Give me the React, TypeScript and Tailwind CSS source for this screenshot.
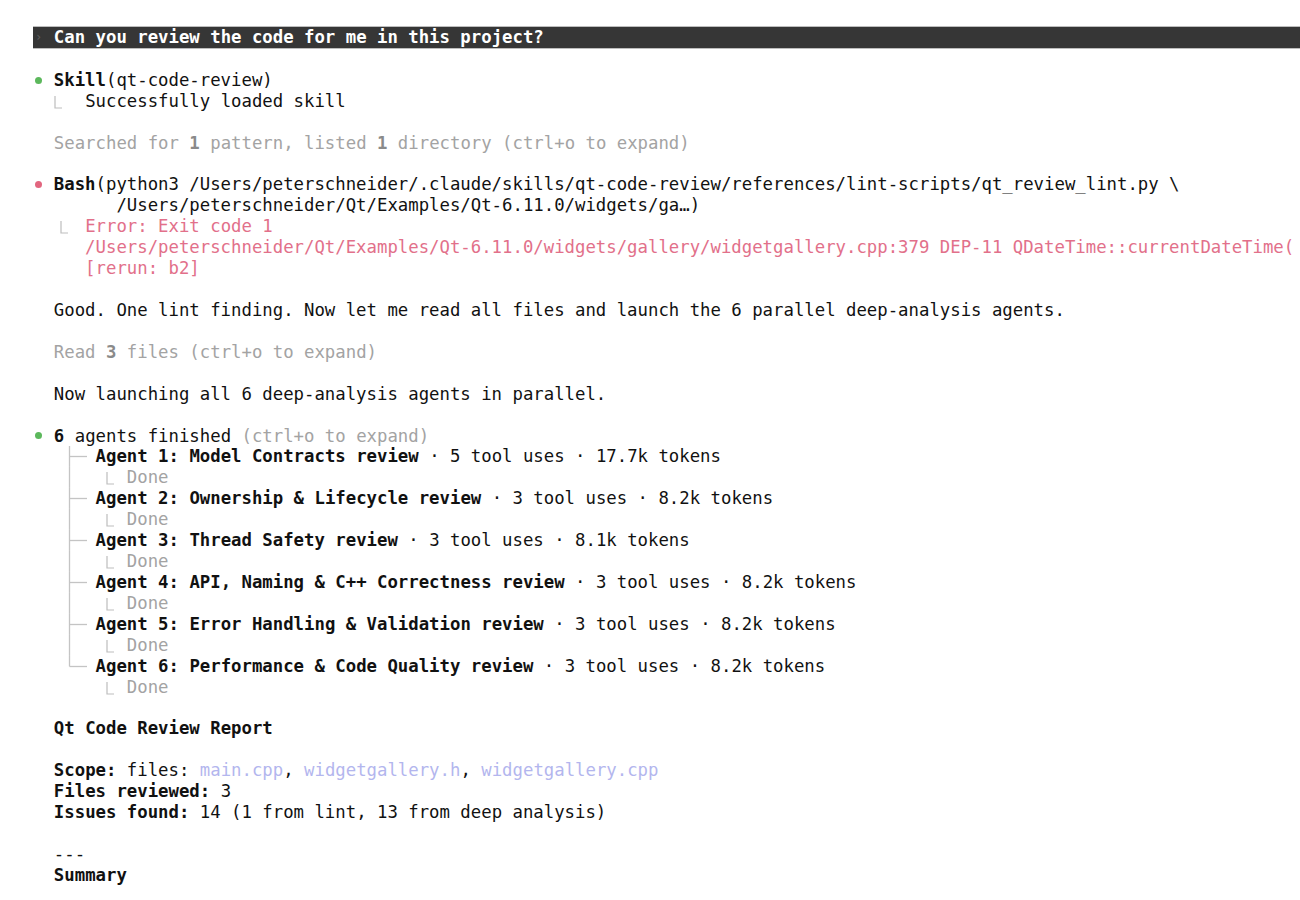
import type { ReactNode } from 'react';

const LH = 'h-[20.925px] leading-[20.925px]';

// small drawings for the terminal box glyphs
const Hook = ({ x = 7 }: { x?: number }) => (
  <svg width="10.43" height="20.925" className="inline-block align-top overflow-visible">
    <path d={`M${x} 5 V17 H${x + 7}`} stroke="#bdbdbd" strokeWidth="1.2" fill="none" />
  </svg>
);

const Tree = ({ kind }: { kind: 'tee' | 'end' | 'bar' | 'none' }) => (
  <svg width="20.86" height="20.925" className="inline-block align-top overflow-visible">
    {kind !== 'none' && (
      <path
        d={kind === 'end' ? 'M5.5 0 V10.5' : 'M5.5 0 V20.925'}
        stroke="#c4c4c4"
        strokeWidth="1.3"
        fill="none"
      />
    )}
    {(kind === 'tee' || kind === 'end') && <path d="M5.5 10.5 H23" stroke="#c4c4c4" strokeWidth="1.3" fill="none" />}
  </svg>
);

const Dot = ({ color }: { color: string }) => (
  <span className="inline-flex w-[2ch] h-[20.925px] align-top items-center">
    <span className={`block w-[7px] h-[7px] rounded-full ml-[1.5px] ${color}`} />
  </span>
);

const Line = ({ children }: { children?: ReactNode }) => (
  <div className={`${LH} whitespace-pre`}>{children ?? ' '}</div>
);

const Gray = ({ children }: { children: ReactNode }) => <span className="text-[#a3a3a3]">{children}</span>;
const Red = ({ children }: { children: ReactNode }) => <span className="text-[#e2708a]">{children}</span>;
const Link = ({ children }: { children: ReactNode }) => <span className="text-[#b3b6ee]">{children}</span>;

const agents = [
  { name: 'Agent 1: Model Contracts review', uses: 5, tokens: '17.7k' },
  { name: 'Agent 2: Ownership & Lifecycle review', uses: 3, tokens: '8.2k' },
  { name: 'Agent 3: Thread Safety review', uses: 3, tokens: '8.1k' },
  { name: 'Agent 4: API, Naming & C++ Correctness review', uses: 3, tokens: '8.2k' },
  { name: 'Agent 5: Error Handling & Validation review', uses: 3, tokens: '8.2k' },
  { name: 'Agent 6: Performance & Code Quality review', uses: 3, tokens: '8.2k' },
];

export default function App() {
  return (
    <div
      className="w-[1300px] h-[900px] overflow-hidden bg-white text-[#111] text-[17.32px] pt-[27px] pl-[33px]"
      style={{ fontFamily: '"DejaVu Sans Mono", "Liberation Mono", monospace' }}
    >
      {/* prompt bar */}
      <div className={`${LH} flex whitespace-pre bg-[#363636] text-white border-y border-[#bdbdbd] -mt-px box-content`}>
        <span className="text-[#5e5e5e] text-[12px] w-[20.86px] shrink-0 pl-[2px]">›</span>
        <span className="font-semibold">Can you review the code for me in this project?</span>
      </div>
      <Line />
      <Line>
        <Dot color="bg-[#5cb85c]" />
        <b>Skill</b>(qt-code-review)
      </Line>
      <Line>
        {'  '}
        <Hook x={1} />
        {'  Successfully loaded skill'}
      </Line>
      <Line />
      <Line>
        <Gray>
          {'  Searched for '}
          <b className="text-[#8a8a8a]">1</b>
          {' pattern, listed '}
          <b className="text-[#8a8a8a]">1</b>
          {' directory (ctrl+o to expand)'}
        </Gray>
      </Line>
      <Line />
      <Line>
        <Dot color="bg-[#e2667f]" />
        <b>Bash</b>(python3 /Users/peterschneider/.claude/skills/qt-code-review/references/lint-scripts/qt_review_lint.py \
      </Line>
      <Line>{'        /Users/peterschneider/Qt/Examples/Qt-6.11.0/widgets/ga…)'}</Line>
      <Line>
        {'  '}
        <Hook x={7} />
        <Red>{'  Error: Exit code 1'}</Red>
      </Line>
      <Line>
        <Red>{'     /Users/peterschneider/Qt/Examples/Qt-6.11.0/widgets/gallery/widgetgallery.cpp:379 DEP-11 QDateTime::currentDateTime('}</Red>
      </Line>
      <Line>
        <Red>{'     [rerun: b2]'}</Red>
      </Line>
      <Line />
      <Line>{'  Good. One lint finding. Now let me read all files and launch the 6 parallel deep-analysis agents.'}</Line>
      <Line />
      <Line>
        <Gray>
          {'  Read '}
          <b className="text-[#8a8a8a]">3</b>
          {' files (ctrl+o to expand)'}
        </Gray>
      </Line>
      <Line />
      <Line>{'  Now launching all 6 deep-analysis agents in parallel.'}</Line>
      <Line />
      <Line>
        <Dot color="bg-[#5cb85c]" />
        <b>6</b> agents finished <Gray>(ctrl+o to expand)</Gray>
      </Line>
      {agents.map((a, i) => {
        const last = i === agents.length - 1;
        return (
          <div key={a.name}>
            <Line>
              {'   '}
              <Tree kind={last ? 'end' : 'tee'} />
              {' '}
              <b>{a.name}</b>
              {` · ${a.uses} tool uses · ${a.tokens} tokens`}
            </Line>
            <Line>
              {'   '}
              <Tree kind={last ? 'none' : 'bar'} />
              {' '}
              <Hook x={11} />
              <Gray>{'  Done'}</Gray>
            </Line>
          </div>
        );
      })}
      <Line />
      <Line>
        {'  '}
        <b>Qt Code Review Report</b>
      </Line>
      <Line />
      <Line>
        {'  '}
        <b>Scope:</b>
        {' files: '}
        <Link>main.cpp</Link>
        {', '}
        <Link>widgetgallery.h</Link>
        {', '}
        <Link>widgetgallery.cpp</Link>
      </Line>
      <Line>
        {'  '}
        <b>Files reviewed:</b>
        {' 3'}
      </Line>
      <Line>
        {'  '}
        <b>Issues found:</b>
        {' 14 (1 from lint, 13 from deep analysis)'}
      </Line>
      <Line />
      <Line>{'  ---'}</Line>
      <Line>
        {'  '}
        <b>Summary</b>
      </Line>
    </div>
  );
}
